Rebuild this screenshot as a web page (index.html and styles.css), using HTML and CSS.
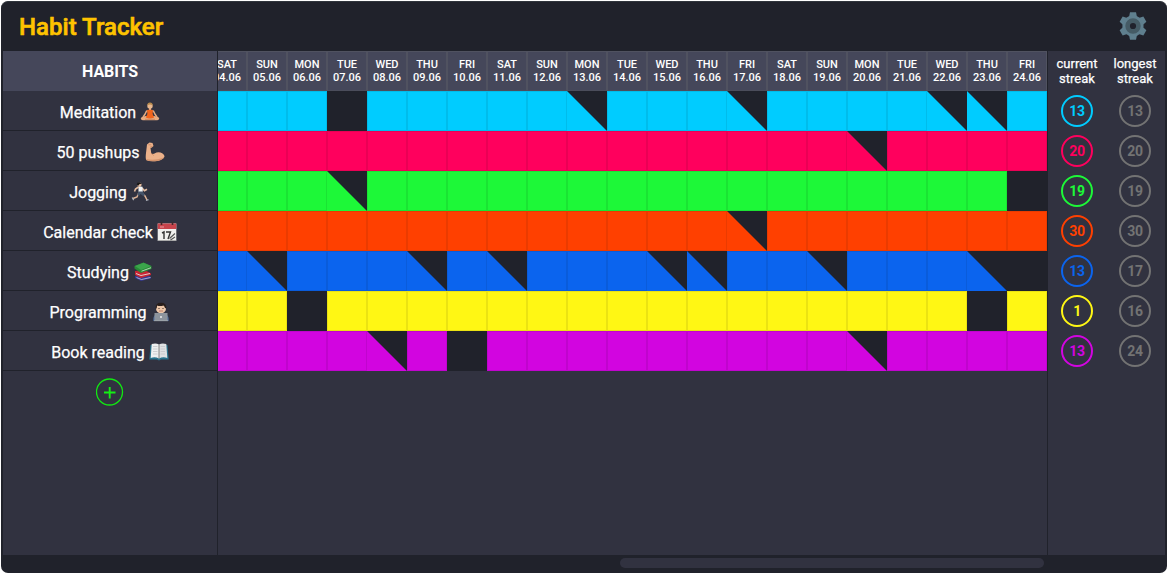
FILE: index.html
```
<!DOCTYPE html>
<html lang="en">
<head>
<meta charset="utf-8">
<title>Habit Tracker</title>
<link rel="stylesheet" href="styles.css">
</head>
<body>
<div class="app">
  <header class="topbar">
    <h1 class="title">Habit Tracker</h1>
    <svg class="gear" viewBox="0 0 28 28">
      <g fill="#5f7f8e">
        <circle cx="14" cy="14" r="10.6"/>
        <path id="tooth" d="M10 5 L11 .3 H17 L18 5Z"/>
        <use href="#tooth" transform="rotate(60 14 14)"/><use href="#tooth" transform="rotate(120 14 14)"/>
        <use href="#tooth" transform="rotate(180 14 14)"/><use href="#tooth" transform="rotate(240 14 14)"/>
        <use href="#tooth" transform="rotate(300 14 14)"/>
      </g>
      <circle cx="14" cy="14" r="5.4" fill="#20222c" stroke="#455b65" stroke-width="4.600"/>
    </svg>
  </header>
  <main class="board">
    <section class="habits">
      <div class="habits-head">HABITS</div>
      <div class="habit"><span>Meditation</span>
        <svg class="emoji" viewBox="0 0 20 20"><path d="M.8 16.500q0-1.800 5-2.500h8.400q5 .7 5 2.500t-3.200 1.800H4q-3.200 0-3.200-1.800z" fill="#e8ab80"/><path d="M7 8q3-1.200 6 0l-.4 4 1.600 3.500q-4.200 2-8.400 0L7.400 12z" fill="#f2641c"/><path d="M6.800 8.500 4.800 12.500 3 15M13.200 8.500l2 4L17 15" stroke="#e8ab80" stroke-width="1.500" fill="none"/><path d="M9 6h2v2H9z" fill="#dba077"/><circle cx="10" cy="4" r="2.700" fill="#e8b78e"/><path d="M7.300 3.500q0-3 2.700-3t2.700 3q-2.700-2-5.400 0z" fill="#b78a4c"/><path d="M5 17.300h10" stroke="#c77f54" stroke-width=".8"/></svg></div>
      <div class="habit"><span>50 pushups</span>
        <svg class="emoji arm" viewBox="0 0 20 20"><path d="M2 2.500 4.500.5 7.500 1 8.500 4 6.500 5.800 5.500 6 6.300 11.500Q8 12.300 9.500 11.500q3-2 6-1 3.800 1.200 4 4.200Q17.500 18.500 10 19.200 4 19.700 1.200 18 .3 16 1 11z" fill="#ebb18a"/><path d="M1.200 17q8 2 18-1.500-3 3.500-9.500 3.800-5 .3-8.200-1z" fill="#d3936c"/><path d="M7.500 4.300 5 5.200M6.300 11.500Q8 12.500 8.500 13.500M3.500 2.800h2.800" stroke="#c5845e" stroke-width=".8" fill="none"/></svg></div>
      <div class="habit"><span>Jogging</span>
        <svg class="emoji" viewBox="0 0 20 20"><path d="M7.500 11.500 6 15l-4 1.500M11 11l3 3 2 4" stroke="#e0b496" stroke-width="1.500" fill="none"/><path d="M7.500 5 4.500 7l-1 2.500M11 6l2.500 2.800 2.500-1.500" stroke="#e5bc9e" stroke-width="1.600" fill="none"/><path d="m7.500 4.200 4 .6.3 5.700H7.500z" fill="#f1f3f5"/><path d="M7.300 9.500h4.500L14 13l-1.500 1.200-3-2.200-1.700 2-1.500-1z" fill="#455368"/><circle cx="8.500" cy="2.700" r="2.100" fill="#e5bc9e"/><path d="M5.700 2.500Q6 .2 8.500.3l2.300 1.200-2.500.8-1 1.500z" fill="#171717"/><path d="m1.200 15.500 1.500 2.600M15 18.500l2.500-.8" stroke="#aab0b8" stroke-width="1.300"/></svg></div>
      <div class="habit"><span>Calendar check</span>
        <svg class="emoji" viewBox="0 0 20 20"><path d="M.7 1.500h18.600V19H.7z" fill="#f0f0ee"/><path d="M.7 1.500h18.600V7H.7z" fill="#c8444c"/><path d="M1 18.500h18" stroke="#aaa"/><path d="M4.500 0v3M15.500 0v3" stroke="#42282b" stroke-width="1.600"/><path d="M3 5h4" stroke="#ed9ca0"/><path d="m5 11 2-1v7M9 10h4.500L11 17" stroke="#333" stroke-width="1.400" fill="none"/><path d="m12.500 16.500 5.500-5M13.500 18l4.500-3" stroke="#555" stroke-width="1.200"/></svg></div>
      <div class="habit"><span>Studying</span>
        <svg class="emoji" viewBox="0 0 20 20"><path d="m2 14 10-2 6 3v1.500L8 19l-6-3z" fill="#353890"/><path d="m3.500 15.500 5 2 9-2" stroke="#d8d8e2" stroke-width=".7" fill="none"/><path d="m2 9 10-1 6 3.500V13L8 16l-6-3z" fill="#c62535"/><path d="m3 11.500 5 2 9-2" stroke="#eee" stroke-width=".8" fill="none"/><path d="m1.500 4 9-3.500L18.500 4v3L8 11 1.500 6.500z" fill="#278a36"/><path d="m2 4 8.500-3.300L18 4 8 8z" fill="#3ba44b"/><path d="m8.500 9.200 9.500-3.500" stroke="#d4e6cf" stroke-width=".8"/></svg></div>
      <div class="habit"><span>Programming</span>
        <svg class="emoji" viewBox="0 0 20 20"><path d="M2.300 19q-.5-7 4.700-7h6q5.200 0 4.700 7z" fill="#526f9b"/><circle cx="10" cy="6.500" r="5" fill="#edc7a9"/><path d="M4.700 6.500Q4.200.7 10 .7t5.300 5.800L14 6q-.5-2-1.500-2.500-3.500 1-6.500 0L5.700 6.500z" fill="#281e1b"/><path d="M7.500 6.500h1M11.500 6.500h1" stroke="#392820"/><path d="M8 9h4" stroke="#b06f5a" stroke-width=".8"/><path d="M3.500 11h13v8h-13z" fill="#8d949d"/><path d="M3 18.700h14" stroke="#a3a9af" stroke-width=".8"/><circle cx="10" cy="15" r="1" fill="#eee"/></svg></div>
      <div class="habit"><span>Book reading</span>
        <svg class="emoji" viewBox="0 0 20 20"><path d="M1.500 3h17l1.200 14.500H12l-2 1-2-1H.3z" fill="#28738d"/><path d="M2.700 2q4.300-1.300 7.300.5v14Q6 14.500 1.700 16z" fill="#eef0f0"/><path d="M17.300 2q-4.300-1.300-7.300.5v14q4-2 8.300-.5z" fill="#dfe2e3"/><path d="M10 2.500v14" stroke="#777" stroke-width=".9"/><path d="M4 4.500h4.500M4 7h4.500M4 9.500h4.500M4 12h4.500m3-7.500H16M11.500 7H16m-4.500 2.500H16M11.500 12H16" stroke="#c4c7ca" stroke-width=".8"/></svg></div>
      <div class="add-row">
        <svg class="add" viewBox="0 0 28 28"><circle cx="13.500" cy="14" r="13" fill="none" stroke="#12e812" stroke-width="1.300"/><path d="M8 14.500h11.500M13.700 9v11.500" stroke="#14ee14" stroke-width="1.900"/></svg>
      </div>
    </section>
    <section class="calendar">
      <div class="row dates" id="dates"></div>
      <div id="rows"></div>
    </section>
    <section class="streaks">
      <div class="streak-col" id="current"><div class="streak-head">current<br>streak</div></div>
      <div class="streak-col longest" id="longest"><div class="streak-head">longest<br>streak</div></div>
    </section>
  </main>
  <footer class="scroll"><div class="thumb"></div></footer>
</div>
<script src="script.js"></script>
</body>
</html>
```
FILE: styles.css
```
* { box-sizing: border-box; }
body { margin: 0; background: #fff; color: #fff; font-family: Roboto, "Liberation Sans", sans-serif; overflow: hidden; }
.app { height: 572px; margin: 1px 1px 0; padding: 0 2px; background: #20222b; border-radius: 7px; display: flex; flex-direction: column; border-top: 1px solid #30353c; }
.topbar { flex: 0 0 49px; display: flex; justify-content: space-between; align-items: center; padding: 0 18px 1px 16px; }
.title { margin: 2px 0 0; font-size: 24px; font-weight: 500; line-height: 28px; color: #fec300; -webkit-text-stroke: .6px #fec300; letter-spacing: .02px; }
.gear { width: 28px; height: 28px; display: block; }
.board { flex: 0 0 504px; display: flex; background: #313240; }
.habits { width: 215px; border-right: 1px solid #20222b; }
.habits-head { height: 40px; background: #45475a; display: flex; align-items: center; justify-content: center; font-size: 16px; font-weight: 700; letter-spacing: -.1px; }
.habit { height: 40px; border-bottom: 1px solid #20222b; display: flex; align-items: center; justify-content: center; gap: 4px; font-size: 16px; padding-top: 3px; -webkit-text-stroke: .25px #fff; }
.emoji { width: 20px; height: 20px; display: block; }
.arm { margin: 0 -2px 0 2px; }
.add-row { display: flex; justify-content: center; padding-top: 7px; }
.add { width: 28px; height: 28px; }
.calendar { width: 829px; overflow: hidden; }
.row { height: 40px; display: flex; justify-content: flex-end; }
.date { flex: 0 0 40px; background: #45475a; border: 1px solid #505260; border-bottom-color: #4b4d5b; font-size: 11px; line-height: 13px; font-weight: 500; text-align: center; padding-top: 6px; white-space: nowrap; }
.cell { flex: 0 0 40px; border: 1px solid rgba(0, 0, 0, .08); background: var(--c) border-box; }
.cell.half { border: 0; background: linear-gradient(to top right, var(--c) 49.5%, #20222b 50.5%); }
.cell.none { border: 0; background: #20222b; }
.streaks { flex: 1; display: flex; border-left: 1px solid #20222b; }
.streak-col { width: 58px; display: flex; flex-direction: column; align-items: center; }
.streak-head { height: 44px; padding-top: 5px; font-size: 13px; line-height: 15px; text-align: center; -webkit-text-stroke: .25px #fff; }
.badge { width: 32px; height: 32px; margin-bottom: 8px; border: 2px solid var(--c); border-radius: 50%; color: var(--c); display: flex; align-items: center; justify-content: center; font-size: 14px; letter-spacing: -.3px; font-weight: 700; }
.longest { --c: #737373; }
.scroll { display: flex; padding: 3px 0 0 617px; }
.thumb { width: 424px; height: 10px; border-radius: 5px; background: #313240; }
```
FILE: script.js
```
const days = ['SAT', 'SUN', 'MON', 'TUE', 'WED', 'THU', 'FRI'];
// '#' done, '/' partly done, '.' not done
const habits = [
  { color: '#00ccff', days: '###.#####/###/####//#', current: 13, longest: 13 },
  { color: '#ff005d', days: '################/####', current: 20, longest: 20 },
  { color: '#1df838', days: '###/################.', current: 19, longest: 19 },
  { color: '#ff4000', days: '#############/#######', current: 30, longest: 30 },
  { color: '#0b64ee', days: '#/###/#/###//##/###/.', current: 13, longest: 17 },
  { color: '#fff714', days: '##.################.#', current: 1, longest: 16 },
  { color: '#d205e0', days: '####/#.#########/####', current: 13, longest: 24 }
];
const kinds = { '#': 'cell', '/': 'cell half', '.': 'cell none' };

function add(parent, className, html = '') {
  const el = document.createElement('div');
  el.className = className;
  el.innerHTML = html;
  parent.appendChild(el);
  return el;
}

const byId = id => document.getElementById(id);
for (let d = 0; d < 21; d++) {
  add(byId('dates'), 'date', days[d % 7] + '<br>' + String(d + 4).padStart(2, '0') + '.06');
}
for (const habit of habits) {
  const row = add(byId('rows'), 'row');
  row.style.setProperty('--c', habit.color);
  for (const day of habit.days) add(row, kinds[day]);
  add(byId('current'), 'badge', habit.current).style.setProperty('--c', habit.color);
  add(byId('longest'), 'badge', habit.longest);
}
```
